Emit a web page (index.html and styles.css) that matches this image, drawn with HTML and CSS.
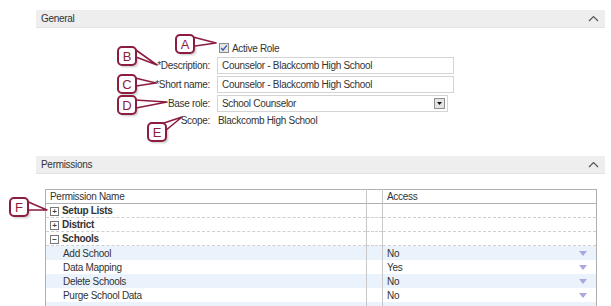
FILE: index.html
```html
<!DOCTYPE html>
<html>
<head>
<meta charset="utf-8">
<link rel="stylesheet" href="styles.css">
</head>
<body>
<div class="page">
  <div class="section-head">
    <span>General</span>
    <svg class="chev" width="11" height="7" viewBox="0 0 11 7"><polyline points="1,6 5.5,1.5 10,6" fill="none" stroke="#555" stroke-width="1.2"/></svg>
  </div>
  <div class="form">
    <div class="lbl"></div>
    <div class="val check-row">
      <svg class="cb" width="10" height="10" viewBox="0 0 10 10"><rect x="0.5" y="0.5" width="9" height="9" fill="#e6e6e6" stroke="#8a8a8a"/><polyline points="2.2,5 4,7.2 7.8,2.4" fill="none" stroke="#3a5fa8" stroke-width="1.4"/></svg>
      <span>Active Role</span>
    </div>
    <div class="lbl">*Description:</div>
    <div class="val"><div class="input">Counselor - Blackcomb High School</div></div>
    <div class="lbl">*Short name:</div>
    <div class="val"><div class="input">Counselor - Blackcomb High School</div></div>
    <div class="lbl">Base role:</div>
    <div class="val"><div class="select"><span>School Counselor</span>
      <span class="sel-btn"><svg width="5" height="3" viewBox="0 0 5 3"><polygon points="0,0 5,0 2.5,3" fill="#111"/></svg></span></div></div>
    <div class="lbl">Scope:</div>
    <div class="val text">Blackcomb High School</div>
  </div>

  <div class="section-head perm-head">
    <span>Permissions</span>
    <svg class="chev" width="11" height="7" viewBox="0 0 11 7"><polyline points="1,6 5.5,1.5 10,6" fill="none" stroke="#555" stroke-width="1.2"/></svg>
  </div>

  <table class="perm">
    <colgroup><col class="c1"><col class="c2"><col class="c3"></colgroup>
    <thead>
      <tr><th>Permission Name</th><th></th><th>Access</th></tr>
    </thead>
    <tbody>
      <tr class="group"><td><span class="tog">+</span>Setup Lists</td><td></td><td></td></tr>
      <tr class="group"><td><span class="tog">+</span>District</td><td></td><td></td></tr>
      <tr class="group"><td><span class="tog">−</span>Schools</td><td></td><td></td></tr>
      <tr class="item alt"><td>Add School</td><td></td><td><div class="acc"><span>No</span><span class="dd"></span></div></td></tr>
      <tr class="item"><td>Data Mapping</td><td></td><td><div class="acc"><span>Yes</span><span class="dd"></span></div></td></tr>
      <tr class="item alt"><td>Delete Schools</td><td></td><td><div class="acc"><span>No</span><span class="dd"></span></div></td></tr>
      <tr class="item"><td>Purge School Data</td><td></td><td><div class="acc"><span>No</span><span class="dd"></span></div></td></tr>
      <tr class="item alt"><td>&nbsp;</td><td></td><td></td></tr>
    </tbody>
  </table>
</div>

<svg class="callouts" width="611" height="306" viewBox="0 0 611 306">
  <defs>
    <filter id="sh" x="-50%" y="-50%" width="200%" height="200%">
      <feGaussianBlur stdDeviation="1.2"/>
    </filter>
  </defs>
  <g class="co">
    <!-- A -->
    <rect x="178" y="37" width="18" height="18" rx="4" fill="#999" opacity="0.55" filter="url(#sh)"/>
    <path d="M193,37 L216,43 L195,46" fill="#fff" stroke="#8c1d40" stroke-width="1.6" stroke-linejoin="round"/>
    <rect x="176" y="35" width="18" height="18" rx="4" fill="#fff" stroke="#8c1d40" stroke-width="2"/>
    <text x="185" y="49">A</text>
    <!-- B -->
    <rect x="120" y="49" width="18" height="18" rx="4" fill="#999" opacity="0.55" filter="url(#sh)"/>
    <path d="M133,48 L157,65 L136,57" fill="#fff" stroke="#8c1d40" stroke-width="1.6" stroke-linejoin="round"/>
    <rect x="118" y="47" width="18" height="18" rx="4" fill="#fff" stroke="#8c1d40" stroke-width="2"/>
    <text x="127" y="61">B</text>
    <!-- C -->
    <rect x="120" y="77" width="18" height="18" rx="4" fill="#999" opacity="0.55" filter="url(#sh)"/>
    <path d="M135,78 L156,83 L136,86" fill="#fff" stroke="#8c1d40" stroke-width="1.6" stroke-linejoin="round"/>
    <rect x="118" y="75" width="18" height="18" rx="4" fill="#fff" stroke="#8c1d40" stroke-width="2"/>
    <text x="127" y="89">C</text>
    <!-- D -->
    <rect x="120" y="98" width="18" height="18" rx="4" fill="#999" opacity="0.55" filter="url(#sh)"/>
    <path d="M135,100 L167,102 L136,108" fill="#fff" stroke="#8c1d40" stroke-width="1.6" stroke-linejoin="round"/>
    <rect x="118" y="96" width="18" height="18" rx="4" fill="#fff" stroke="#8c1d40" stroke-width="2"/>
    <text x="127" y="110">D</text>
    <!-- E -->
    <rect x="150" y="125" width="18" height="18" rx="4" fill="#999" opacity="0.55" filter="url(#sh)"/>
    <path d="M161,124 L182,117 L165,131" fill="#fff" stroke="#8c1d40" stroke-width="1.6" stroke-linejoin="round"/>
    <rect x="148" y="123" width="18" height="18" rx="4" fill="#fff" stroke="#8c1d40" stroke-width="2"/>
    <text x="157" y="137">E</text>
    <!-- F -->
    <rect x="12" y="200" width="18" height="18" rx="4" fill="#999" opacity="0.55" filter="url(#sh)"/>
    <path d="M26,201 L47,210 L27,210" fill="#fff" stroke="#8c1d40" stroke-width="1.6" stroke-linejoin="round"/>
    <rect x="10" y="198" width="18" height="18" rx="4" fill="#fff" stroke="#8c1d40" stroke-width="2"/>
    <text x="19" y="212">F</text>
  </g>
</svg>
</body>
</html>
```

FILE: styles.css
```css
html, body {
  margin: 0;
  padding: 0;
  background: #fff;
}
body {
  font-family: "Liberation Sans", Arial, sans-serif;
  font-size: 10px;
  letter-spacing: -0.3px;
  color: #333;
  width: 611px;
  height: 306px;
  overflow: hidden;
  position: relative;
}
.page {
  padding: 10px 6px 0 36px;
}
.section-head {
  height: 18px;
  background: #eeeeee;
  border-bottom: 1px solid #e2e2e2;
  box-sizing: border-box;
  display: flex;
  align-items: center;
  justify-content: space-between;
  padding: 0 6px 0 5px;
  color: #333;
}
.chev {
  display: block;
}
.form {
  display: grid;
  grid-template-columns: 174px 237px;
  column-gap: 7px;
  row-gap: 2px;
  grid-template-rows: 14px 17px 17px 17px 13px;
  margin-top: 13px;
  align-items: center;
}
.lbl {
  text-align: right;
  white-space: nowrap;
}
.val {
  display: flex;
  align-items: center;
}
.val.text {
  padding-left: 1px;
}
.check-row {
  gap: 3px;
  padding-left: 2px;
}
.cb {
  display: block;
}
.input {
  width: 237px;
  height: 17px;
  box-sizing: border-box;
  border: 1px solid #d4d4d4;
  padding: 0 4px;
  display: flex;
  align-items: center;
  white-space: nowrap;
  overflow: hidden;
}
.select {
  width: 231px;
  height: 17px;
  box-sizing: border-box;
  border: 1px solid #d4d4d4;
  padding: 0 2px 0 4px;
  display: flex;
  align-items: center;
  justify-content: space-between;
}
.sel-btn {
  width: 11px;
  height: 11px;
  box-sizing: border-box;
  border: 1px solid #8e8e8e;
  background: #e4e4e4;
  display: flex;
  align-items: center;
  justify-content: center;
}
.sel-btn svg { display: block; }
.perm-head {
  margin-top: 29px;
}
.perm {
  margin: 15px 9px 0 9px;
  width: 551px;
  border-collapse: collapse;
  table-layout: fixed;
  border: 1px solid #b0b0b0;
}
.c1 { width: 321px; }
.c2 { width: 16px; }
.c3 { width: 214px; }
.perm th {
  height: 13px;
  padding: 0 4px;
  font-weight: normal;
  text-align: left;
  border-bottom: 1px solid #b0b0b0;
  border-left: 1px solid #c8c8c8;
  line-height: 13px;
}
.perm td {
  height: 14px;
  padding: 0 4px;
  line-height: 13px;
  border-left: 1px solid #c8c8c8;
  white-space: nowrap;
}
.perm th:first-child, .perm td:first-child {
  border-left: none;
}
.group td {
  height: 13px;
  font-weight: bold;
  border-bottom: 1px dashed #d0d0d0;
}
.tog {
  display: inline-flex;
  width: 7px;
  height: 7px;
  border: 1px solid #777;
  font-size: 8px;
  line-height: 7px;
  letter-spacing: 0;
  font-weight: bold;
  align-items: center;
  justify-content: center;
  margin-right: 3px;
  vertical-align: 0;
  color: #444;
}
.item td:first-child {
  padding-left: 17px;
}
.item.alt td {
  background: #eaf2fc;
}
.acc {
  display: flex;
  justify-content: space-between;
  align-items: center;
}
.dd {
  width: 0;
  height: 0;
  border-left: 4px solid transparent;
  border-right: 4px solid transparent;
  border-top: 5px solid #a9a6e0;
  margin-right: 5px;
}
.callouts {
  position: absolute;
  left: 0;
  top: 0;
  pointer-events: none;
}
.co text {
  font-family: "Liberation Sans", Arial, sans-serif;
  font-size: 13px;
  letter-spacing: 0;
  fill: #8c1d40;
  text-anchor: middle;
}
```
